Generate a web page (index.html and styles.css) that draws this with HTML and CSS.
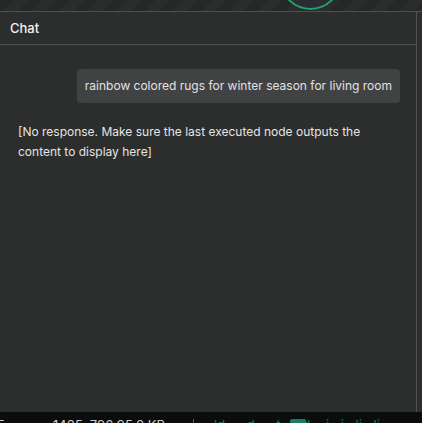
FILE: index.html
```html
<html>
    <head>
        <link rel="stylesheet" href="styles.css">
    </head>
    <body>
        <div class="canvas-strip">
            <div class="node-dot"></div>
        </div>
        <div class="panel">
            <div class="panel-head">Chat</div>
            <div class="panel-body">
                <div class="msg user">
                    <div class="bubble">rainbow colored rugs for winter season for living room</div>
                </div>
                <div class="msg bot">[No response. Make sure the last executed node outputs the content to display here]</div>
            </div>
        </div>
        <div class="status">
            <span class="st-a">5</span>
            <span class="st-b">1405, 796 95.0 KB</span>
            <span class="st-sep"></span>
            <span class="st-c">ld d t d</span>
            <span class="st-box"></span>
            <span class="st-d">i i li li</span>
        </div>
    </body>
</html>
```

FILE: styles.css
```css
:root {
    --c-bg: #2c2e2d;
    --c-line: #4f5150;
    --c-text: #e6e6e6;
    --c-bubble: #404243;
    --c-teal: #1f7a66;
}

html, body {
    margin: 0;
    padding: 0;
}

body {
    width: 422px;
    height: 423px;
    overflow: hidden;
    background: var(--c-bg);
    font-family: Inter, "Noto Sans", sans-serif;
    font-size: 12px;
    color: var(--c-text);
    display: flex;
    flex-direction: column;
}

.canvas-strip {
    height: 11px;
    flex: none;
    position: relative;
    overflow: hidden;
    background: repeating-linear-gradient(135deg, #262727 0 10px, #2b2c2c 10px 20px);
    border-bottom: 1px solid var(--c-line);
}

.node-dot {
    position: absolute;
    left: 281px;
    top: -46px;
    width: 55px;
    height: 52px;
    border-radius: 50%;
    border: 2px solid #21a36b;
    background: #2a2c36;
}

.panel {
    flex: 1;
    display: flex;
    flex-direction: column;
    border-right: 1px solid var(--c-line);
    margin-right: 5px;
}

.panel-head {
    height: 32px;
    flex: none;
    display: flex;
    align-items: center;
    padding-left: 10px;
    font-size: 13px;
    font-weight: 500;
    color: #f2f2f2;
    border-bottom: 1px solid var(--c-line);
}

.panel-body {
    flex: 1;
    padding: 24px 16px 0 18px;
    display: flex;
    flex-direction: column;
    gap: 19px;
}

.msg.user {
    display: flex;
    justify-content: flex-end;
}

.bubble {
    background: var(--c-bubble);
    border-radius: 4px;
    padding: 0 8px;
    height: 34px;
    line-height: 34px;
    color: #e2e2e2;
}

.msg.bot {
    line-height: 20px;
    padding-right: 20px;
    color: #e4e4e4;
}

.status {
    height: 11px;
    flex: none;
    background: #0b0c0c;
    display: flex;
    align-items: flex-start;
    overflow: hidden;
    font-size: 13px;
    line-height: 13px;
    color: #cfcfcf;
    white-space: nowrap;
}

.status span {
    margin-top: 7px;
}

.st-a {
    width: 56px;
    margin-left: -3px;
}

.st-b {
    width: 140px;
}

.st-sep {
    width: 1px;
    height: 10px;
    background: var(--c-teal);
}

.st-c {
    width: 76px;
    padding-left: 20px;
    color: var(--c-teal);
    word-spacing: 18px;
}

.st-box {
    width: 16px;
    height: 8px;
    border-radius: 2px;
    background: var(--c-teal);
}

.st-d {
    padding-left: 20px;
    color: var(--c-teal);
    word-spacing: 8px;
}
```
